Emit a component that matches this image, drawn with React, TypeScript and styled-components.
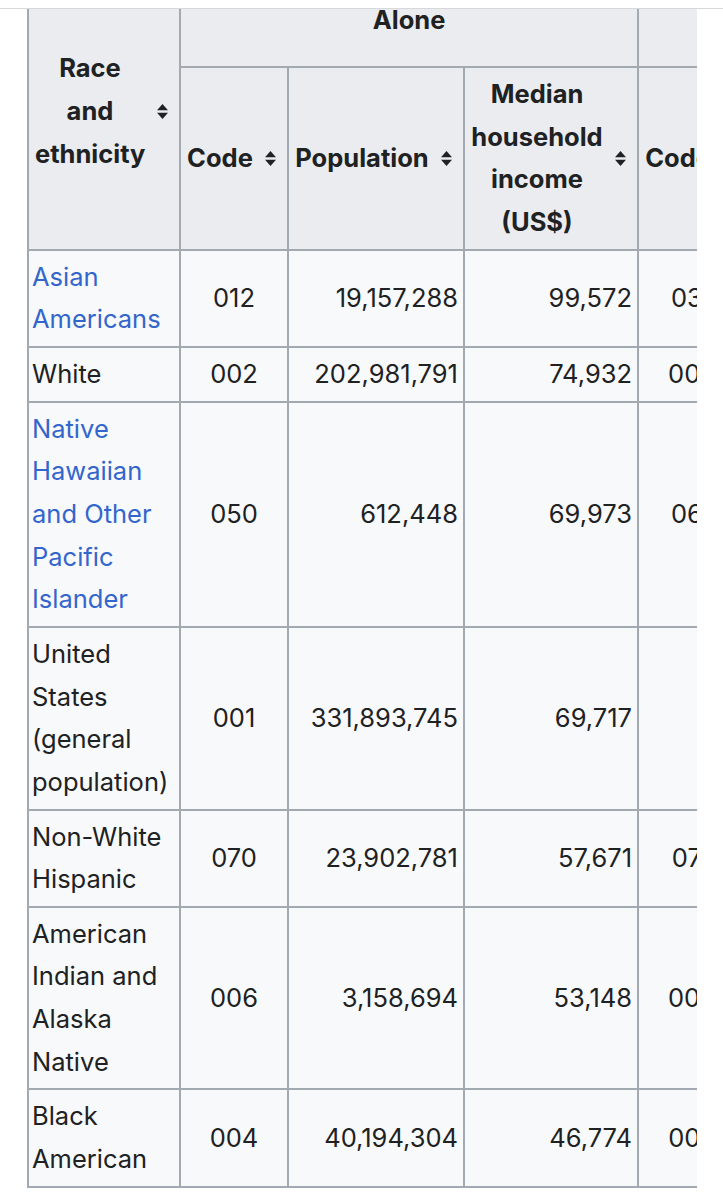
import React from "react";
import styled, { createGlobalStyle } from "styled-components";

const GlobalStyle = createGlobalStyle`
  html, body {
    margin: 0;
    padding: 0;
    background: #ffffff;
  }
  body {
    font-family: Inter, "Noto Sans", "Liberation Sans", sans-serif;
    color: #202122;
  }
`;

const Page = styled.div`
  width: 723px;
  height: 1200px;
  background: #ffffff;
  overflow: hidden;
`;

const TopRule = styled.div`
  height: 8px;
  border-bottom: 1px solid #d6d8dc;
`;

const Clip = styled.div`
  margin: 0 26px 0 27px;
  overflow: hidden;
`;

const Table = styled.table`
  margin-top: -37px;
  border-collapse: collapse;
  table-layout: fixed;
  width: 1068px;
  border: 2px solid #a2a9b1;
  background: #f8f9fa;
  font-size: 25.5px;
  line-height: 42.65px;
`;

const HeadCell = styled.th<{ $sortable?: boolean; $tall?: boolean }>`
  position: relative;
  background: #eaecf0;
  border: 2px solid #a2a9b1;
  font-weight: 700;
  text-align: center;
  vertical-align: middle;
  padding: 5px ${(p) => (p.$sortable ? "34px" : "6px")} 5px 6px;
  height: ${(p) => (p.$tall ? "82px" : "auto")};
`;

const SortMark = styled.svg`
  position: absolute;
  right: 11px;
  top: 50%;
  width: 11px;
  height: 15px;
  margin-top: -7px;
`;

const Cell = styled.td<{ $align: "left" | "center" | "right" }>`
  border: 2px solid #a2a9b1;
  padding: 5px 5px 5px ${(p) => (p.$align === "left" ? "3px" : "5px")};
  text-align: ${(p) => p.$align};
  vertical-align: middle;
  font-weight: 400;
`;

const Link = styled.a`
  color: #3366cc;
  text-decoration: none;
`;

const SortIcon = () => (
  <SortMark viewBox="0 0 11 15" aria-hidden="true">
    <path d="M5.5 0 L11 6.3 L0 6.3 Z" fill="#202122" />
    <path d="M0 8.7 L11 8.7 L5.5 15 Z" fill="#202122" />
  </SortMark>
);

type Row = {
  name: string;
  link?: boolean;
  code: string;
  pop: string;
  income: string;
  code2: string;
  pop2: string;
  income2: string;
};

const rows: Row[] = [
  { name: "Asian Americans", link: true, code: "012", pop: "19,157,288", income: "99,572", code2: "031", pop2: "24,000,998", income2: "94,903" },
  { name: "White", code: "002", pop: "202,981,791", income: "74,932", code2: "003", pop2: "235,411,507", income2: "73,964" },
  { name: "Native Hawaiian and Other Pacific Islander", link: true, code: "050", pop: "612,448", income: "69,973", code2: "061", pop2: "1,592,848", income2: "71,437" },
  { name: "United States (general population)", code: "001", pop: "331,893,745", income: "69,717", code2: "", pop2: "", income2: "" },
  { name: "Non-White Hispanic", code: "070", pop: "23,902,781", income: "57,671", code2: "071", pop2: "49,542,103", income2: "58,560" },
  { name: "American Indian and Alaska Native", code: "006", pop: "3,158,694", income: "53,148", code2: "009", pop2: "9,701,253", income2: "60,124" },
  { name: "Black American", code: "004", pop: "40,194,304", income: "46,774", code2: "005", pop2: "46,936,733", income2: "48,297" },
];

const widths = [152, 108, 176, 174, 108, 176, 174];

export default function App() {
  return (
    <Page>
      <GlobalStyle />
      <TopRule />
      <Clip>
        <Table>
          <colgroup>
            {widths.map((w, i) => (
              <col key={i} style={{ width: `${w}px` }} />
            ))}
          </colgroup>
          <thead>
            <tr>
              <HeadCell rowSpan={2} $sortable>
                Race and ethnicity
                <SortIcon />
              </HeadCell>
              <HeadCell colSpan={3} $tall>
                Alone
              </HeadCell>
              <HeadCell colSpan={3} $tall>
                Alone or in combination
              </HeadCell>
            </tr>
            <tr>
              <HeadCell $sortable>
                Code
                <SortIcon />
              </HeadCell>
              <HeadCell $sortable>
                Population
                <SortIcon />
              </HeadCell>
              <HeadCell $sortable>
                Median household income (US$)
                <SortIcon />
              </HeadCell>
              <HeadCell $sortable>
                Code
                <SortIcon />
              </HeadCell>
              <HeadCell $sortable>
                Population
                <SortIcon />
              </HeadCell>
              <HeadCell $sortable>
                Median household income (US$)
                <SortIcon />
              </HeadCell>
            </tr>
          </thead>
          <tbody>
            {rows.map((r) => (
              <tr key={r.name}>
                <Cell $align="left">
                  {r.link ? <Link href="#">{r.name}</Link> : r.name}
                </Cell>
                <Cell $align="center">{r.code}</Cell>
                <Cell $align="right">{r.pop}</Cell>
                <Cell $align="right">{r.income}</Cell>
                <Cell $align="center">{r.code2}</Cell>
                <Cell $align="right">{r.pop2}</Cell>
                <Cell $align="right">{r.income2}</Cell>
              </tr>
            ))}
          </tbody>
        </Table>
      </Clip>
    </Page>
  );
}
